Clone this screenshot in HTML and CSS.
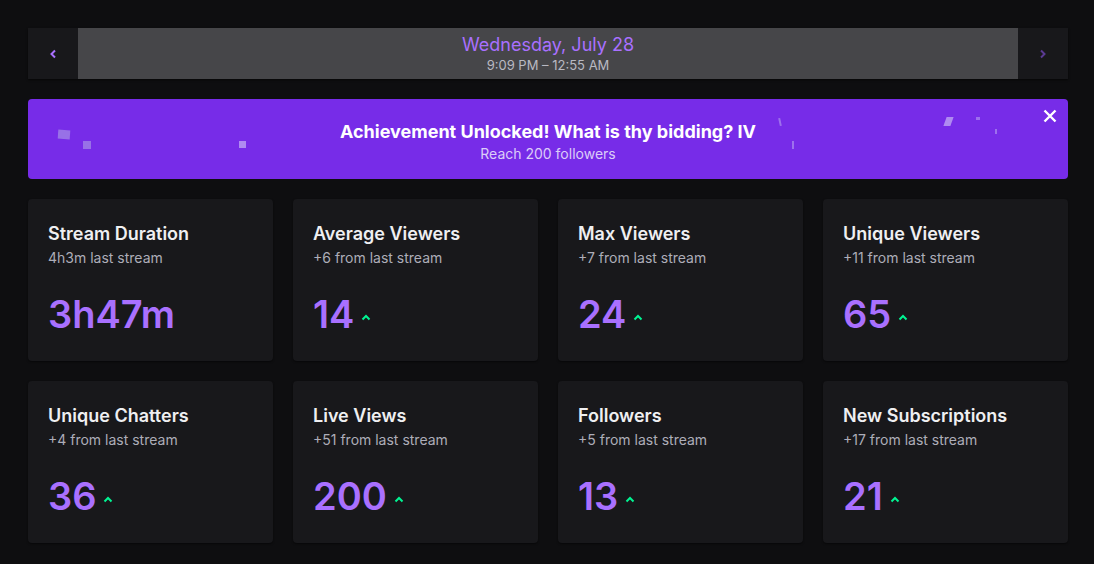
FILE: index.html
```html
<!DOCTYPE html>
<html lang="en">
<head>
<meta charset="utf-8">
<title>Stream Summary</title>
<link rel="stylesheet" href="styles.css">
</head>
<body>
<main class="page">
  <header class="datebar">
    <button class="nav nav-prev" aria-label="Previous">
      <svg width="8" height="10" viewBox="0 0 8 10"><path d="M6 1.5 L2.5 5 L6 8.5" fill="none" stroke="currentColor" stroke-width="2"/></svg>
    </button>
    <div class="date">
      <div class="date-day">Wednesday, July 28</div>
      <div class="date-time">9:09 PM – 12:55 AM</div>
    </div>
    <button class="nav nav-next" aria-label="Next">
      <svg width="8" height="10" viewBox="0 0 8 10"><path d="M2 1.5 L5.5 5 L2 8.5" fill="none" stroke="currentColor" stroke-width="2"/></svg>
    </button>
  </header>

  <section class="banner">
    <span class="confetti c1"></span>
    <span class="confetti c2"></span>
    <span class="confetti c3"></span>
    <span class="confetti c4"></span>
    <span class="confetti c5"></span>
    <span class="confetti c6"></span>
    <span class="confetti c7"></span>
    <span class="confetti c8"></span>
    <div class="banner-title">Achievement Unlocked! What is thy bidding? IV</div>
    <div class="banner-sub">Reach 200 followers</div>
    <button class="close" aria-label="Close">
      <svg width="14" height="14" viewBox="0 0 14 14"><path d="M1.5 1.5 L12.5 12.5 M12.5 1.5 L1.5 12.5" stroke="#fff" stroke-width="2.4"/></svg>
    </button>
  </section>

  <section class="grid">
    <article class="card">
      <h3 class="card-title">Stream Duration</h3>
      <p class="card-sub">4h3m last stream</p>
      <div class="card-value"><span class="num">3h47m</span></div>
    </article>
    <article class="card">
      <h3 class="card-title">Average Viewers</h3>
      <p class="card-sub">+6 from last stream</p>
      <div class="card-value"><span class="num">14</span><svg class="up" width="10" height="7" viewBox="0 0 10 7"><path d="M1.5 5.5 L5 2 L8.5 5.5" fill="none" stroke="currentColor" stroke-width="2"/></svg></div>
    </article>
    <article class="card">
      <h3 class="card-title">Max Viewers</h3>
      <p class="card-sub">+7 from last stream</p>
      <div class="card-value"><span class="num">24</span><svg class="up" width="10" height="7" viewBox="0 0 10 7"><path d="M1.5 5.5 L5 2 L8.5 5.5" fill="none" stroke="currentColor" stroke-width="2"/></svg></div>
    </article>
    <article class="card">
      <h3 class="card-title">Unique Viewers</h3>
      <p class="card-sub">+11 from last stream</p>
      <div class="card-value"><span class="num">65</span><svg class="up" width="10" height="7" viewBox="0 0 10 7"><path d="M1.5 5.5 L5 2 L8.5 5.5" fill="none" stroke="currentColor" stroke-width="2"/></svg></div>
    </article>
    <article class="card">
      <h3 class="card-title">Unique Chatters</h3>
      <p class="card-sub">+4 from last stream</p>
      <div class="card-value"><span class="num">36</span><svg class="up" width="10" height="7" viewBox="0 0 10 7"><path d="M1.5 5.5 L5 2 L8.5 5.5" fill="none" stroke="currentColor" stroke-width="2"/></svg></div>
    </article>
    <article class="card">
      <h3 class="card-title">Live Views</h3>
      <p class="card-sub">+51 from last stream</p>
      <div class="card-value"><span class="num">200</span><svg class="up" width="10" height="7" viewBox="0 0 10 7"><path d="M1.5 5.5 L5 2 L8.5 5.5" fill="none" stroke="currentColor" stroke-width="2"/></svg></div>
    </article>
    <article class="card">
      <h3 class="card-title">Followers</h3>
      <p class="card-sub">+5 from last stream</p>
      <div class="card-value"><span class="num">13</span><svg class="up" width="10" height="7" viewBox="0 0 10 7"><path d="M1.5 5.5 L5 2 L8.5 5.5" fill="none" stroke="currentColor" stroke-width="2"/></svg></div>
    </article>
    <article class="card">
      <h3 class="card-title">New Subscriptions</h3>
      <p class="card-sub">+17 from last stream</p>
      <div class="card-value"><span class="num">21</span><svg class="up" width="10" height="7" viewBox="0 0 10 7"><path d="M1.5 5.5 L5 2 L8.5 5.5" fill="none" stroke="currentColor" stroke-width="2"/></svg></div>
    </article>
  </section>
</main>
</body>
</html>
```

FILE: styles.css
```css
* { box-sizing: border-box; }

html, body {
  margin: 0;
  background: #0e0e10;
  font-family: Inter, "Noto Sans", "Liberation Sans", sans-serif;
  color: #efeff1;
}

.page {
  padding: 28px 26px 20px 28px;
  display: flex;
  flex-direction: column;
  gap: 20px;
}

.datebar {
  display: flex;
  height: 51px;
  background: #18181b;
  box-shadow: 0 1px 2px rgba(0,0,0,0.6);
}

.nav {
  width: 50px;
  border: 0;
  padding: 0;
  background: #18181b;
  display: flex;
  align-items: center;
  justify-content: center;
  cursor: pointer;
}
.nav-prev { color: #a970ff; }
.nav-next { color: #5a3a93; }

.date {
  flex: 1;
  background: #464649;
  display: flex;
  flex-direction: column;
  align-items: center;
  justify-content: center;
  gap: 1px;
  padding-top: 1px;
}
.date-day {
  color: #a970ff;
  font-size: 18px;
  line-height: 22px;
}
.date-time {
  color: #b9b9c2;
  font-size: 13px;
  line-height: 17px;
}

.banner {
  position: relative;
  height: 80px;
  background: #772ce8;
  border-radius: 4px;
  display: flex;
  flex-direction: column;
  align-items: center;
  justify-content: center;
  padding-top: 4px;
  overflow: hidden;
}
.banner-title {
  font-size: 18px;
  font-weight: 700;
  line-height: 24px;
  color: #fff;
}
.banner-sub {
  margin-top: 1px;
  font-size: 14px;
  line-height: 18px;
  color: #dccdf8;
}
.close {
  position: absolute;
  top: 10px;
  right: 11px;
  border: 0;
  padding: 0;
  background: transparent;
  width: 14px;
  height: 14px;
  display: flex;
  cursor: pointer;
}

.confetti {
  position: absolute;
  background: rgba(190, 170, 240, 0.55);
}
.c1 { left: 30px; top: 31px; width: 12px; height: 9px; transform: rotate(4deg); background: rgba(175,160,230,0.6); }
.c2 { left: 55px; top: 42px; width: 8px; height: 8px; background: rgba(175,160,230,0.6); }
.c3 { left: 211px; top: 42px; width: 7px; height: 7px; background: rgba(200,180,245,0.7); }
.c4 { left: 751px; top: 19px; width: 2px; height: 8px; transform: rotate(-12deg); }
.c5 { left: 764px; top: 42px; width: 2px; height: 8px; }
.c6 { left: 917px; top: 18px; width: 7px; height: 9px; transform: skewX(-20deg); background: rgba(200,180,245,0.7); }
.c7 { left: 948px; top: 18px; width: 4px; height: 3px; }
.c8 { left: 967px; top: 30px; width: 2px; height: 5px; }

.grid {
  display: grid;
  grid-template-columns: repeat(4, 1fr);
  column-gap: 20px;
  row-gap: 20px;
}

.card {
  background: #18181b;
  border-radius: 4px;
  height: 162px;
  padding: 23px 20px 0 20px;
  box-shadow: 0 1px 2px rgba(0,0,0,0.5);
}
.card-title {
  margin: 0;
  font-size: 18px;
  font-weight: 600;
  line-height: 24px;
  color: #efeff1;
}
.card-sub {
  margin: 2px 0 0 0;
  font-size: 14px;
  line-height: 20px;
  color: #adadb8;
}
.card-value {
  margin-top: 23px;
  display: flex;
  align-items: center;
  gap: 7px;
  height: 46px;
}
.num {
  font-size: 38px;
  font-weight: 600;
  line-height: 46px;
  color: #a970ff;
}
.up {
  color: #00f593;
  margin-top: 6px;
}
```
